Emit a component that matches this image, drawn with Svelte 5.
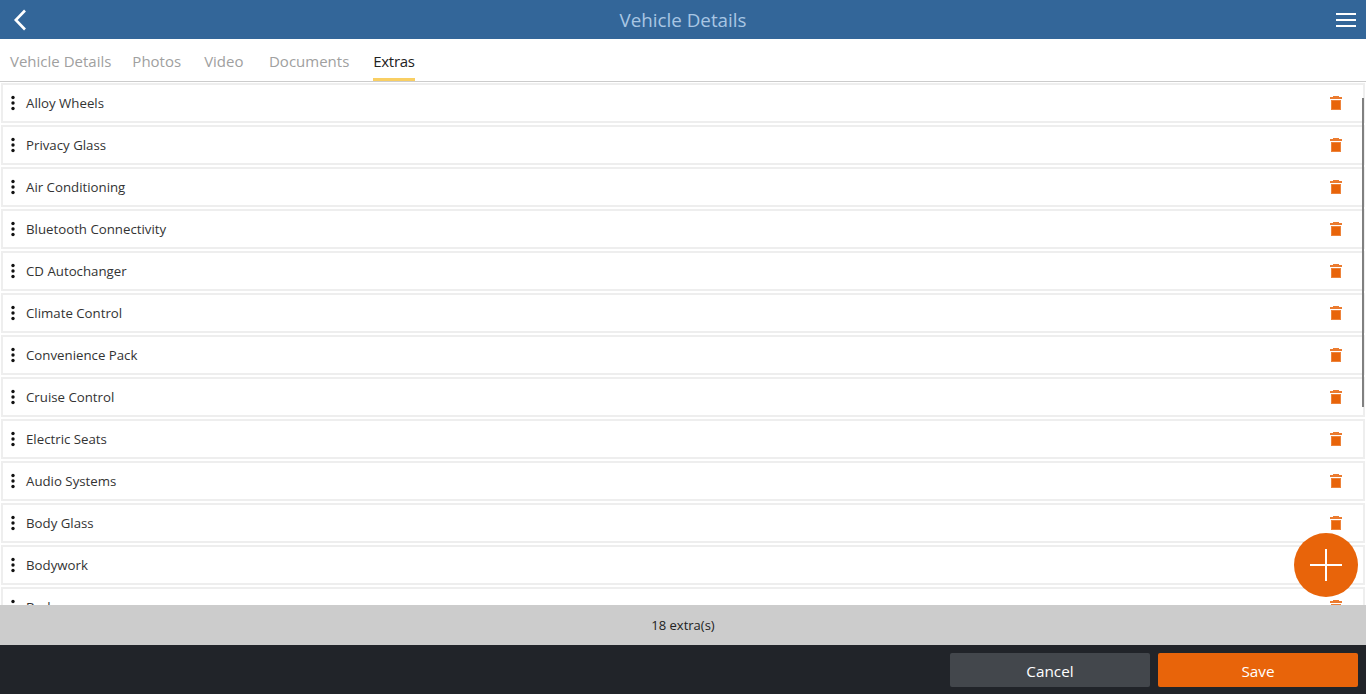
<script>
  const tabs = ['Vehicle Details', 'Photos', 'Video', 'Documents', 'Extras'];
  const extras = [
    'Alloy Wheels', 'Privacy Glass', 'Air Conditioning', 'Bluetooth Connectivity',
    'CD Autochanger', 'Climate Control', 'Convenience Pack', 'Cruise Control',
    'Electric Seats', 'Audio Systems', 'Body Glass', 'Bodywork', 'Brakes'
  ];
</script>

<div class="page">
  <header class="topbar">
    <button class="icon back" aria-label="Back">
      <svg width="14" height="22" viewBox="0 0 14 22"><path d="M12 1.500 2.800 11l9.200 9.500" fill="none" stroke="#fff" stroke-width="2.600" /></svg>
    </button>
    <h1>Vehicle Details</h1>
    <button class="icon menu" aria-label="Menu"><span></span><span></span><span></span></button>
  </header>

  <nav class="tabs">
    {#each tabs as tab}
      <span class="tab" class:active={tab === 'Extras'}>{tab}</span>
    {/each}
  </nav>

  <main class="list">
    {#each extras as extra}
      <div class="row">
        <span class="grip">
          <svg width="4" height="16" viewBox="0 0 4 16">
            <circle cx="2" cy="2.500" r="1.700" />
            <circle cx="2" cy="8" r="1.700" />
            <circle cx="2" cy="13.500" r="1.700" />
          </svg>
        </span>
        <span class="name">{extra}</span>
        <svg class="trash" width="12" height="14" viewBox="0 0 12 14">
          <path d="M3 0h6v1h3v2H0V1h3z" fill="#e8640a" opacity=".85" />
          <path d="M1 4h10v10H1z" fill="#e8640a" opacity=".8" />
          <path d="M2 5h8v8H2z" fill="#e8640a" />
        </svg>
      </div>
    {/each}
    <div class="scrollbar"></div>
  </main>

  <button class="fab" aria-label="Add">
    <svg width="32" height="32" viewBox="0 0 32 32"><path d="M16 0v32M0 16h32" stroke="#fff" stroke-width="2" /></svg>
  </button>

  <div class="status">18 extra(s)</div>

  <footer class="actions">
    <button class="btn cancel">Cancel</button>
    <button class="btn save">Save</button>
  </footer>
</div>

<style>
  :global(body) {
    margin: 0;
    font-family: "Open Sans", "Noto Sans", sans-serif;
  }

  .page {
    position: relative;
    display: flex;
    flex-direction: column;
    height: 100vh;
    overflow: hidden;
    background: #fff;
  }

  button {
    font-family: inherit;
    border: none;
    padding: 0;
    cursor: pointer;
  }

  .topbar {
    flex: none;
    height: 39px;
    display: grid;
    grid-template-columns: 1fr auto 1fr;
    align-items: center;
    padding: 0 10px;
    background: #336699;
  }

  .topbar h1 {
    margin: 0;
    font-size: 18.800px;
    font-weight: 400;
    color: #a9c6e4;
  }

  .icon {
    background: none;
    display: flex;
  }

  .back {
    margin-left: 3px;
  }

  .menu {
    width: 20px;
    flex-direction: column;
    gap: 4px;
    justify-self: end;
  }

  .menu span {
    height: 2px;
    background: #fff;
  }

  .tabs {
    flex: none;
    height: 43px;
    box-sizing: border-box;
    display: flex;
    gap: 23px;
    padding-left: 10px;
    border-bottom: 1px solid #ccc;
  }

  .tab {
    font-size: 15px;
    line-height: 45px;
    color: #a0a0a0;
    height: 42px;
    box-sizing: border-box;
  }

  .tab:first-child {
    margin-right: -2px;
  }

  .tab:nth-child(3) {
    margin-right: 2.500px;
  }

  .tab.active {
    margin-left: 1px;
    color: #222;
    letter-spacing: -0.300px;
    border-bottom: 3px solid #f9cf63;
  }

  .list {
    flex: 1;
    min-height: 0;
    position: relative;
    overflow: hidden;
    padding: 1px 1px 0;
  }

  .row {
    height: 40px;
    box-sizing: border-box;
    display: flex;
    align-items: center;
    margin-bottom: 2px;
    border: 2px solid #eeeeee;
    padding-right: 21px;
  }

  .grip {
    width: 20px;
    margin-right: 3px;
    display: flex;
    justify-content: center;
    fill: #111;
  }

  .name {
    flex: 1;
    font-size: 13.250px;
    color: #333;
  }

  .trash {
    flex: none;
  }

  .scrollbar {
    position: absolute;
    top: 16px;
    right: 2px;
    width: 2px;
    height: 309px;
    background: #808080;
  }

  .fab {
    position: absolute;
    left: 1294px;
    top: 533px;
    width: 64px;
    height: 64px;
    border-radius: 50%;
    background: #e8640a;
    display: flex;
    align-items: center;
    justify-content: center;
  }

  .status {
    flex: none;
    height: 40px;
    display: flex;
    align-items: center;
    justify-content: center;
    background: #cccccc;
    font-size: 13px;
    color: #222;
  }

  .actions {
    flex: none;
    height: 49px;
    box-sizing: border-box;
    display: flex;
    justify-content: flex-end;
    gap: 8px;
    padding: 8px;
    background: #212429;
  }

  .btn {
    width: 200px;
    height: 34px;
    padding-top: 1px;
    border-radius: 2px;
    color: #fff;
    font-size: 15.300px;
  }

  .cancel {
    background: #43474c;
  }

  .save {
    background: #e8640a;
  }
</style>
